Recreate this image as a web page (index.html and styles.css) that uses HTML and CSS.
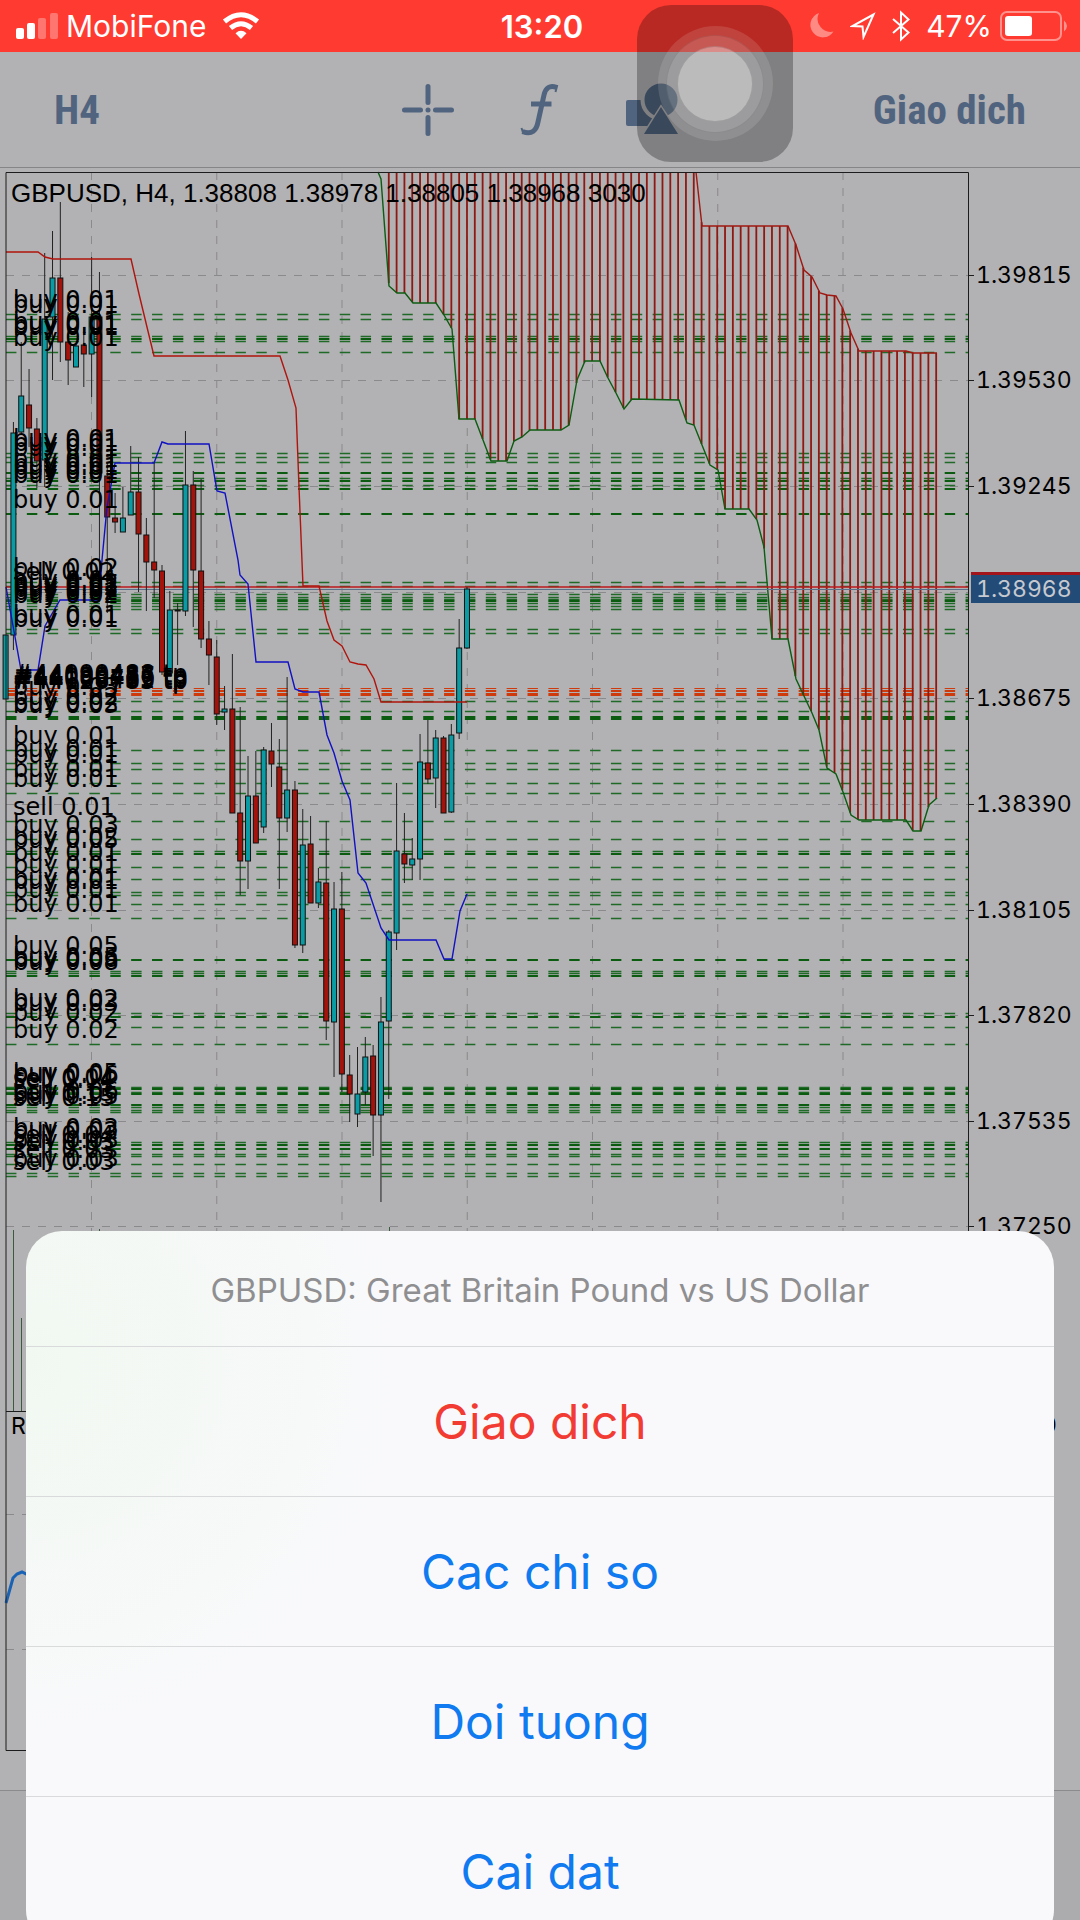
FILE: index.html
```html
<!DOCTYPE html>
<html lang="vi">
<head>
  <meta charset="UTF-8">
  <meta name="viewport" content="width=device-width, initial-scale=1.0">
  <title>GBPUSD, H4</title>
  <link rel="stylesheet" href="styles.css">
</head>
<body>
  <header class="status">
    <div class="status_left">
      <svg width="42" height="26" viewBox="0 0 42 26" fill="#fff" aria-hidden="true">
        <rect x="0" y="15" width="8" height="11" rx="2"/>
        <rect x="11" y="10" width="8" height="16" rx="2"/>
        <rect x="22" y="5" width="8" height="21" rx="2" opacity=".3"/>
        <rect x="34" y="0" width="8" height="26" rx="2" opacity=".3"/>
      </svg>
      <span>MobiFone</span>
      <svg class="wifi" width="38" height="28" viewBox="0 0 38 28" fill="none" stroke="#fff" stroke-width="5" aria-hidden="true">
        <path d="M2.500 9.500Q19 -4 35.500 9.500"/>
        <path d="M8.500 16Q19 7.500 29.500 16"/>
        <path d="M19 27L13.500 21.200Q19 16.500 24.500 21.200Z" fill="#fff" stroke="none"/>
      </svg>
    </div>
    <div class="status_time">13:20</div>
    <div class="status_right">
      <svg width="24" height="26" viewBox="0 0 24 26" fill="#fff" opacity=".4" aria-hidden="true">
        <path d="M9 0A13 13 0 0 0 23.500 18.500A12.500 12.500 0 1 1 9 0Z"/>
      </svg>
      <svg width="26" height="28" viewBox="0 0 26 28" fill="none" stroke="#fff" stroke-width="2" stroke-linejoin="miter" aria-hidden="true">
        <path d="M23.500 2.500L2.500 14L12.500 14.500L13.500 25Z"/>
      </svg>
      <svg width="18" height="32" viewBox="0 0 18 32" fill="none" stroke="#fff" stroke-width="2" aria-hidden="true">
        <path d="M1 9L16.500 22.500L9 29.500V2.500L16.500 9.500L1 23"/>
      </svg>
      <span>47%</span>
      <svg width="68" height="30" viewBox="0 0 68 30" aria-hidden="true">
        <rect x="1" y="1" width="60" height="28" rx="6" fill="none" stroke="#fff" stroke-width="2" opacity=".45"/>
        <rect x="5" y="5" width="27" height="20" rx="3" fill="#fff"/>
        <path d="M64 9.500Q70 15 64 20.500Z" fill="#fff" opacity=".45"/>
      </svg>
    </div>
  </header>

  <nav class="toolbar">
    <button class="tool_text" type="button">H4</button>
    <div class="tools">
      <button class="tool" type="button" aria-label="Crosshair">
        <svg width="54" height="54" viewBox="0 0 54 54" stroke="#50647f" stroke-width="5" stroke-linecap="round" fill="none">
          <path d="M27 3.500V19.500M27 34.500V50.500M3.500 27H19.500M34.500 27H50.500M27 27h.01"/>
        </svg>
      </button>
      <button class="tool" type="button" aria-label="Indicators">
        <svg width="54" height="54" viewBox="0 0 54 54" stroke="#50647f" fill="none">
          <path d="M43.500 4.500C37 1.500 32.500 5 31 12L25 39C23.500 47 19 52.500 9.500 48.500" stroke-width="5"/>
          <path d="M44.300 2L42.500 9M8.500 45L10.500 51" stroke-width="2"/>
          <path d="M18 21H38.500" stroke-width="5"/>
        </svg>
      </button>
      <button class="tool" type="button" aria-label="Objects">
        <svg width="54" height="54" viewBox="0 0 54 54" fill="#50647f">
          <rect x="1" y="17" width="28" height="26" rx="2"/>
          <circle cx="36" cy="17" r="18.500" stroke="#b2b1b3" stroke-width="4"/>
          <path d="M36 24L53 51H19Z" stroke="#b2b1b3" stroke-width="3" paint-order="stroke"/>
        </svg>
      </button>
    </div>
    <button class="tool_text tool_trade" type="button">Giao dich</button>
  </nav>

  <main class="chart">
    <svg id="chart" viewBox="0 168 1080 1622" role="img" aria-label="GBPUSD H4"></svg>
  </main>
  <footer class="tabbar"></footer>

  <section class="sheet" aria-labelledby="sheet_title">
    <h1 class="sheet_title" id="sheet_title">GBPUSD: Great Britain Pound vs US Dollar</h1>
    <button class="sheet_item danger" type="button">Giao dich</button>
    <button class="sheet_item" type="button">Cac chi so</button>
    <button class="sheet_item" type="button">Doi tuong</button>
    <button class="sheet_item" type="button">Cai dat</button>
  </section>

  <div class="assistive"><span class="ring"><span class="ring_mid"><span class="ring_dot"></span></span></span></div>

  <script src="chart.js"></script>
</body>
</html>
```

FILE: styles.css
```css
*{
  margin: 0;
  padding: 0;
  box-sizing: border-box;
}

body{
  position: relative;
  display: flex;
  flex-direction: column;
  height: 100vh;
  overflow: hidden;
  background-color: #b2b1b3;
  font-family: Inter, "Liberation Sans", sans-serif;
}

button{
  border: 0;
  background: none;
  font: inherit;
  cursor: pointer;
}

svg{
  display: block;
}

/* status bar */
.status{
  display: grid;
  grid-template-columns: 1fr auto 1fr;
  align-items: center;
  flex: none;
  height: 52px;
  padding: 0 12px 0 16px;
  background-color: #ff3a31;
  color: #fff;
  font-size: 30px;
}

.status_left,
.status_right{
  display: flex;
  align-items: center;
  gap: 8px;
}

.status_left .wifi{
  margin-left: 8px;
}

.status_right{
  justify-content: flex-end;
  gap: 16px;
}

.status_right span{
  margin-right: -8px;
}

.status_time{
  font-size: 31px;
  font-weight: 600;
}

/* toolbar */
.toolbar{
  display: grid;
  grid-template-columns: 1fr auto 1fr;
  align-items: center;
  flex: none;
  height: 116px;
  padding: 0 54px;
  border-bottom: 1px solid #858486;
}

.tools{
  display: flex;
  gap: 58px;
}

.tool_text{
  justify-self: start;
  color: #50647f;
  font-family: "Roboto Condensed", Roboto, sans-serif;
  font-size: 41px;
  font-weight: bold;
}

.tool_trade{
  justify-self: end;
}

/* chart */
.chart{
  flex: none;
}

.chart svg{
  width: 100%;
}

.tabbar{
  flex: 1;
  border-top: 1px solid #8b8a8c;
  background-color: #acabad;
}

.frame{
  fill: none;
  stroke: #1c1c1c;
}

.grid{
  stroke: #8a898b;
  stroke-dasharray: 8 8;
}

.level{
  stroke: #1f6a26;
  stroke-width: 1.3;
  stroke-dasharray: 10.43 10.43;
}

.level.bold{
  stroke: #0b5c10;
  stroke-width: 2;
}

.level.tp{
  stroke: #cf3a0c;
  stroke-width: 1;
}

.hatch{
  stroke: #8e1812;
  stroke-width: 1.8;
}

.wick{
  stroke: #222;
}

.volume{
  stroke: #3b5a3e;
}

.up,
.down{
  stroke: #111;
}

.up{
  fill: #0a9ca4;
}

.down{
  fill: #a3130b;
}

.line{
  fill: none;
  stroke-width: 1.4;
}

.kijun{
  stroke: #b0140d;
}

.tenkan{
  stroke: #1111c4;
}

.span_a{
  stroke: #0c5c12;
}

.span_b{
  stroke: #a01812;
}

.rsi{
  stroke: #1a62b4;
  stroke-width: 3;
}

.label{
  font-family: "DejaVu Sans", sans-serif;
  font-size: 24px;
}

.price{
  font-size: 23px;
  font-variant-numeric: tabular-nums;
}

.price.now{
  fill: #c6c9cf;
}

.head{
  font-family: "Liberation Sans", Arial, sans-serif;
  font-size: 26px;
}

/* action sheet */
.sheet{
  position: absolute;
  left: 26px;
  right: 26px;
  bottom: -26px;
  display: flex;
  flex-direction: column;
  border-radius: 36px;
  overflow: hidden;
  background: radial-gradient(circle at 0 130px, #f1f8f1, #f9f9fb 380px);
}

.sheet_title{
  padding: 39px 20px 36px;
  color: #8f8f91;
  font-size: 33px;
  font-weight: 400;
  line-height: 40px;
  text-align: center;
}

.sheet_item{
  height: 150px;
  border-top: 1px solid #d9dadc;
  color: #107af0;
  font-size: 48px;
}

.sheet_item.danger{
  color: #f23c33;
}

/* floating home button */
.assistive{
  position: absolute;
  top: 5px;
  left: calc(50% + 97px);
  display: grid;
  place-items: center;
  width: 156px;
  height: 157px;
  border-radius: 34px;
  background-color: rgba(0, 0, 0, .28);
}

.ring,
.ring_mid{
  display: grid;
  place-items: center;
  border-radius: 50%;
  background-color: rgba(255, 255, 255, .12);
}

.ring{
  width: 115px;
  height: 115px;
}

.ring_mid{
  width: 98px;
  height: 98px;
  border: 1px solid rgba(0, 0, 0, .1);
}

.ring_dot{
  width: 76px;
  height: 76px;
  border: 1px solid rgba(0, 0, 0, .15);
  border-radius: 50%;
  background-color: rgba(255, 255, 255, .32);
}
```

FILE: chart.js
```js
const chart = document.querySelector("#chart")

const LEFT = 6
const RIGHT = 968
const TOP = 172
const STEP = 7.82
const barX = i => 5.6 + STEP * i

// high, body top, body bottom, low, up(1) / down(0)
const candles = [
  [635,635,699,699,1],[422,433,635,650,1],[342,396,432,433,1],[369,405,428,447,0],[418,429,461,488,0],
  [253,319,460,487,1],[231,278,317,380,1],[202,278,342,362,0],[312,342,360,385,0],[343,346,367,367,1],
  [327,345,354,387,0],[257,317,354,397,1],[272,317,473,600,0],[462,476,517,613,0],[493,518,522,533,0],
  [487,518,532,532,1],[446,492,515,515,1],[457,492,534,592,0],[518,535,562,611,0],[463,562,570,598,0],
  [565,571,672,675,0],[591,610,673,673,1],[603,610,611,665,0],[431,485,611,616,1],[471,485,570,627,0],
  [479,571,639,648,0],[621,639,655,685,0],[640,657,714,725,0],[686,709,712,730,1],[654,709,813,813,0],
  [707,813,861,895,0],[756,796,861,889,1],[751,796,843,843,0],[747,750,827,833,1],[723,751,764,787,0],
  [739,767,818,889,0],[677,790,818,832,1],[781,790,945,948,0],[809,845,945,953,1],[816,844,903,903,0],
  [868,882,903,908,1],[821,883,1021,1040,0],[882,909,1022,1077,1],[872,909,1074,1092,0],[1055,1075,1094,1122,0],
  [1047,1094,1114,1127,1],[1037,1057,1092,1105,1],[1045,1056,1115,1156,0],[997,1022,1115,1202,1],[930,932,1021,1099,1],
  [783,851,933,950,1],[813,854,864,883,0],[838,859,865,880,1],[734,762,859,880,1],[720,763,779,784,0],
  [730,738,778,808,1],[736,738,813,813,0],[724,735,812,813,1],[619,648,733,739,1],[587,589,648,649,1]
]

// y, order text, bold
const levels = [
  [314,"buy 0.01"],[319,"buy 0.01"],[336,"buy 0.01"],[339,"buy 0.01",1],[341,"buy 0.01"],[352,"buy 0.01"],
  [453,"buy 0.01"],[457,"buy 0.01"],[462,"buy 0.01"],[473,"buy 0.01",1],[478,"buy 0.01"],[481,"buy 0.01",1],
  [485,"buy 0.01"],[489,"buy 0.01",1],[514,"buy 0.01",1],
  [582,"buy 0.02"],[586,"sell 0.02"],[594,"buy 0.01"],[597,"buy 0.02"],[599,"buy 0.01"],[601,"buy 0.02",1],
  [603,"buy 0.01"],[606,"buy 0.02"],[609,"buy 0.02"],[629,"buy 0.01"],[633,"buy 0.01"],
  [701,"buy 0.03"],[711,"buy 0.02"],[717,"buy 0.02",1],[719,"buy 0.03",1],
  [750,"buy 0.01"],[763,"buy 0.01"],[769,"buy 0.01"],[783,"buy 0.01"],[793,"buy 0.01"],
  [821,"sell 0.01"],[839,"buy 0.03"],[851,"buy 0.02"],[854,"buy 0.05",1],
  [867,"buy 0.01"],[879,"buy 0.01"],[892,"buy 0.01"],[895,"buy 0.01"],[904,"buy 0.01"],[918,"buy 0.01"],
  [960,"buy 0.05",1],[971,"buy 0.05"],[973,"buy 0.06"],[976,"buy 0.08",1],
  [1013,"buy 0.02"],[1017,"buy 0.03",1],[1027,"buy 0.02"],[1044,"buy 0.02"],
  [1087,"buy 0.05"],[1089,"buy 0.06",1],[1092,"sell 0.04"],[1094,"sell 0.14",1],[1105,"buy 0.06",1],
  [1107,"sell 0.13"],[1110,"buy 0.05"],[1112,"sell 0.15"],
  [1142,"buy 0.03"],[1145,"buy 0.02",1],[1149,"sell 0.04",1],[1154,"buy 0.03"],[1156,"sell 0.03"],
  [1164,"sell 0.03"],[1173,"buy 0.03"],[1176,"sell 0.03"]
]

const takeProfits = [
  [688,"#44090488 tp"],[690,"#44190457 tp"],[691,"#44083486 tp"],
  [693,"#44160763 tp"],[694,"#44098452 tp"],[695,"#44126785 tp"]
]

const prices = [
  [275,"1.39815"],[380,"1.39530"],[486,"1.39245"],[698,"1.38675"],[804,"1.38390"],
  [910,"1.38105"],[1015,"1.37820"],[1121,"1.37535"],[1226,"1.37250"]
]

const kijun = [[6,252],[38,252],[45,257],[53,259],[131,259],[139,294],[154,356],[280,356],[288,380],[296,408],[299,487],
  [303,586],[319,586],[327,621],[334,640],[342,646],[350,662],[358,664],[366,665],[374,679],[381,702],[467,702]]

const tenkan = [[6,587],[21,670],[38,670],[45,626],[60,600],[99,600],[102,560],[107,507],[115,463],[154,463],[162,442],
  [168,444],[209,444],[217,491],[225,493],[238,560],[240,575],[248,584],[256,662],[288,662],[295,689],[303,692],
  [319,692],[327,735],[334,753],[342,781],[350,800],[358,873],[366,883],[381,928],[389,940],[436,940],[444,959],
  [452,959],[460,911],[467,894]]

const spanA = [[378,172],[381,179],[389,286],[397,293],[405,293],[413,303],[436,303],[444,315],[452,329],[459,419],
  [475,419],[483,440],[491,461],[507,461],[514,441],[522,437],[530,430],[561,430],[569,425],[577,380],[585,361],
  [600,361],[608,378],[616,393],[624,409],[632,399],[679,400],[687,423],[694,425],[702,445],[710,465],[718,470],
  [725,509],[749,509],[757,520],[764,547],[772,639],[788,639],[796,679],[812,713],[819,730],[827,768],[836,774],
  [843,792],[851,815],[859,820],[906,820],[913,831],[921,831],[929,805],[937,798]]

const spanB = [[696,172],[702,226],[788,226],[796,245],[804,270],[812,277],[820,293],[827,295],[836,296],[843,309],
  [851,333],[859,351],[906,351],[913,353],[937,353]]

function yAt(points, x){
  if (x <= points[0][0]) return points[0][1]
  for (let i = 1; i < points.length; i++){
    const [x1, y1] = points[i - 1]
    const [x2, y2] = points[i]
    if (x <= x2) return y1 + (y2 - y1) * (x - x1) / (x2 - x1)
  }
  return points[points.length - 1][1]
}

const line = (x1, y1, x2, y2, cls) => `<line class="${cls}" x1="${x1}" y1="${y1}" x2="${x2}" y2="${y2}"/>`
const poly = (points, cls) => `<polyline class="line ${cls}" points="${points.join(" ")}"/>`
const text = (x, y, str, cls) => `<text class="${cls}" x="${x}" y="${y}">${str}</text>`

let out = ""

// grid
for (let i = 0; i < 7; i++){
  const x = 91.5 + 125.25 * i
  out += line(x, TOP, x, 1412, "grid")
}
prices.concat([[592]]).forEach(([y]) => {
  out += line(LEFT, y + .5, RIGHT, y + .5, "grid")
})
out += line(LEFT, 1514.5, RIGHT, 1514.5, "grid")
out += line(LEFT, 1649.5, RIGHT, 1649.5, "grid")

// order levels
levels.forEach(([y, , bold]) => {
  out += line(LEFT, bold ? y : y + .5, RIGHT, bold ? y : y + .5, bold ? "level bold" : "level")
})
takeProfits.forEach(([y]) => {
  out += line(LEFT, y + .5, RIGHT, y + .5, "level tp")
})

// volumes
out += line(13.5, 1230, 13.5, 1412, "volume") + line(21.5, 1318, 21.5, 1412, "volume")
out += line(99.5, 1229, 99.5, 1412, "volume") + line(389.5, 1227, 389.5, 1412, "volume")

// cloud
for (let i = 49; i < 120; i++){
  const x = barX(i)
  out += line(x, yAt(spanB, x), x, yAt(spanA, x), "hatch")
}
out += poly(spanA, "span_a") + poly(spanB, "span_b")

// bid and ask
out += `<path d="M6 589.500H968" stroke="#5b7189"/><path d="M6 587H968" stroke="#bb1a1e" stroke-width="1.500"/>`

// candles
candles.forEach(([high, top, bottom, low, up], i) => {
  const x = barX(i)
  out += line(x, high, x, low, "wick")
  out += `<rect class="${up ? "up" : "down"}" x="${x - 2.5}" y="${top}" width="5" height="${bottom - top}"/>`
})

out += poly(kijun, "kijun") + poly(tenkan, "tenkan")
out += poly([[6,1603],[13,1578],[17,1574],[22,1572],[30,1576]], "rsi")

// labels
levels.forEach(([y, str]) => {
  out += text(13, y - 6, str, "label")
})
takeProfits.forEach(([y, str]) => {
  out += text(13, y - 6, str, "label")
})

// frame
out += `<path class="frame" d="M6 1750.500V172.500H968.500V1750.500H6M6 1411.500H968.500"/>`
out += text(11, 202, "GBPUSD, H4, 1.38808 1.38978 1.38805 1.38968 3030", "head")
out += text(11, 1434, "R", "price") + text(1042, 1433, "0", "price")
prices.forEach(([y, str]) => {
  out += line(RIGHT, y + .5, 974, y + .5, "frame") + text(976, y + 8, str, "price")
})
out += `<rect x="971" y="572" width="109" height="31" fill="#234b77"/><rect x="971" y="572" width="109" height="3" fill="#a3141a"/>`
out += text(976, 597, "1.38968", "price now")

chart.innerHTML = out
```
